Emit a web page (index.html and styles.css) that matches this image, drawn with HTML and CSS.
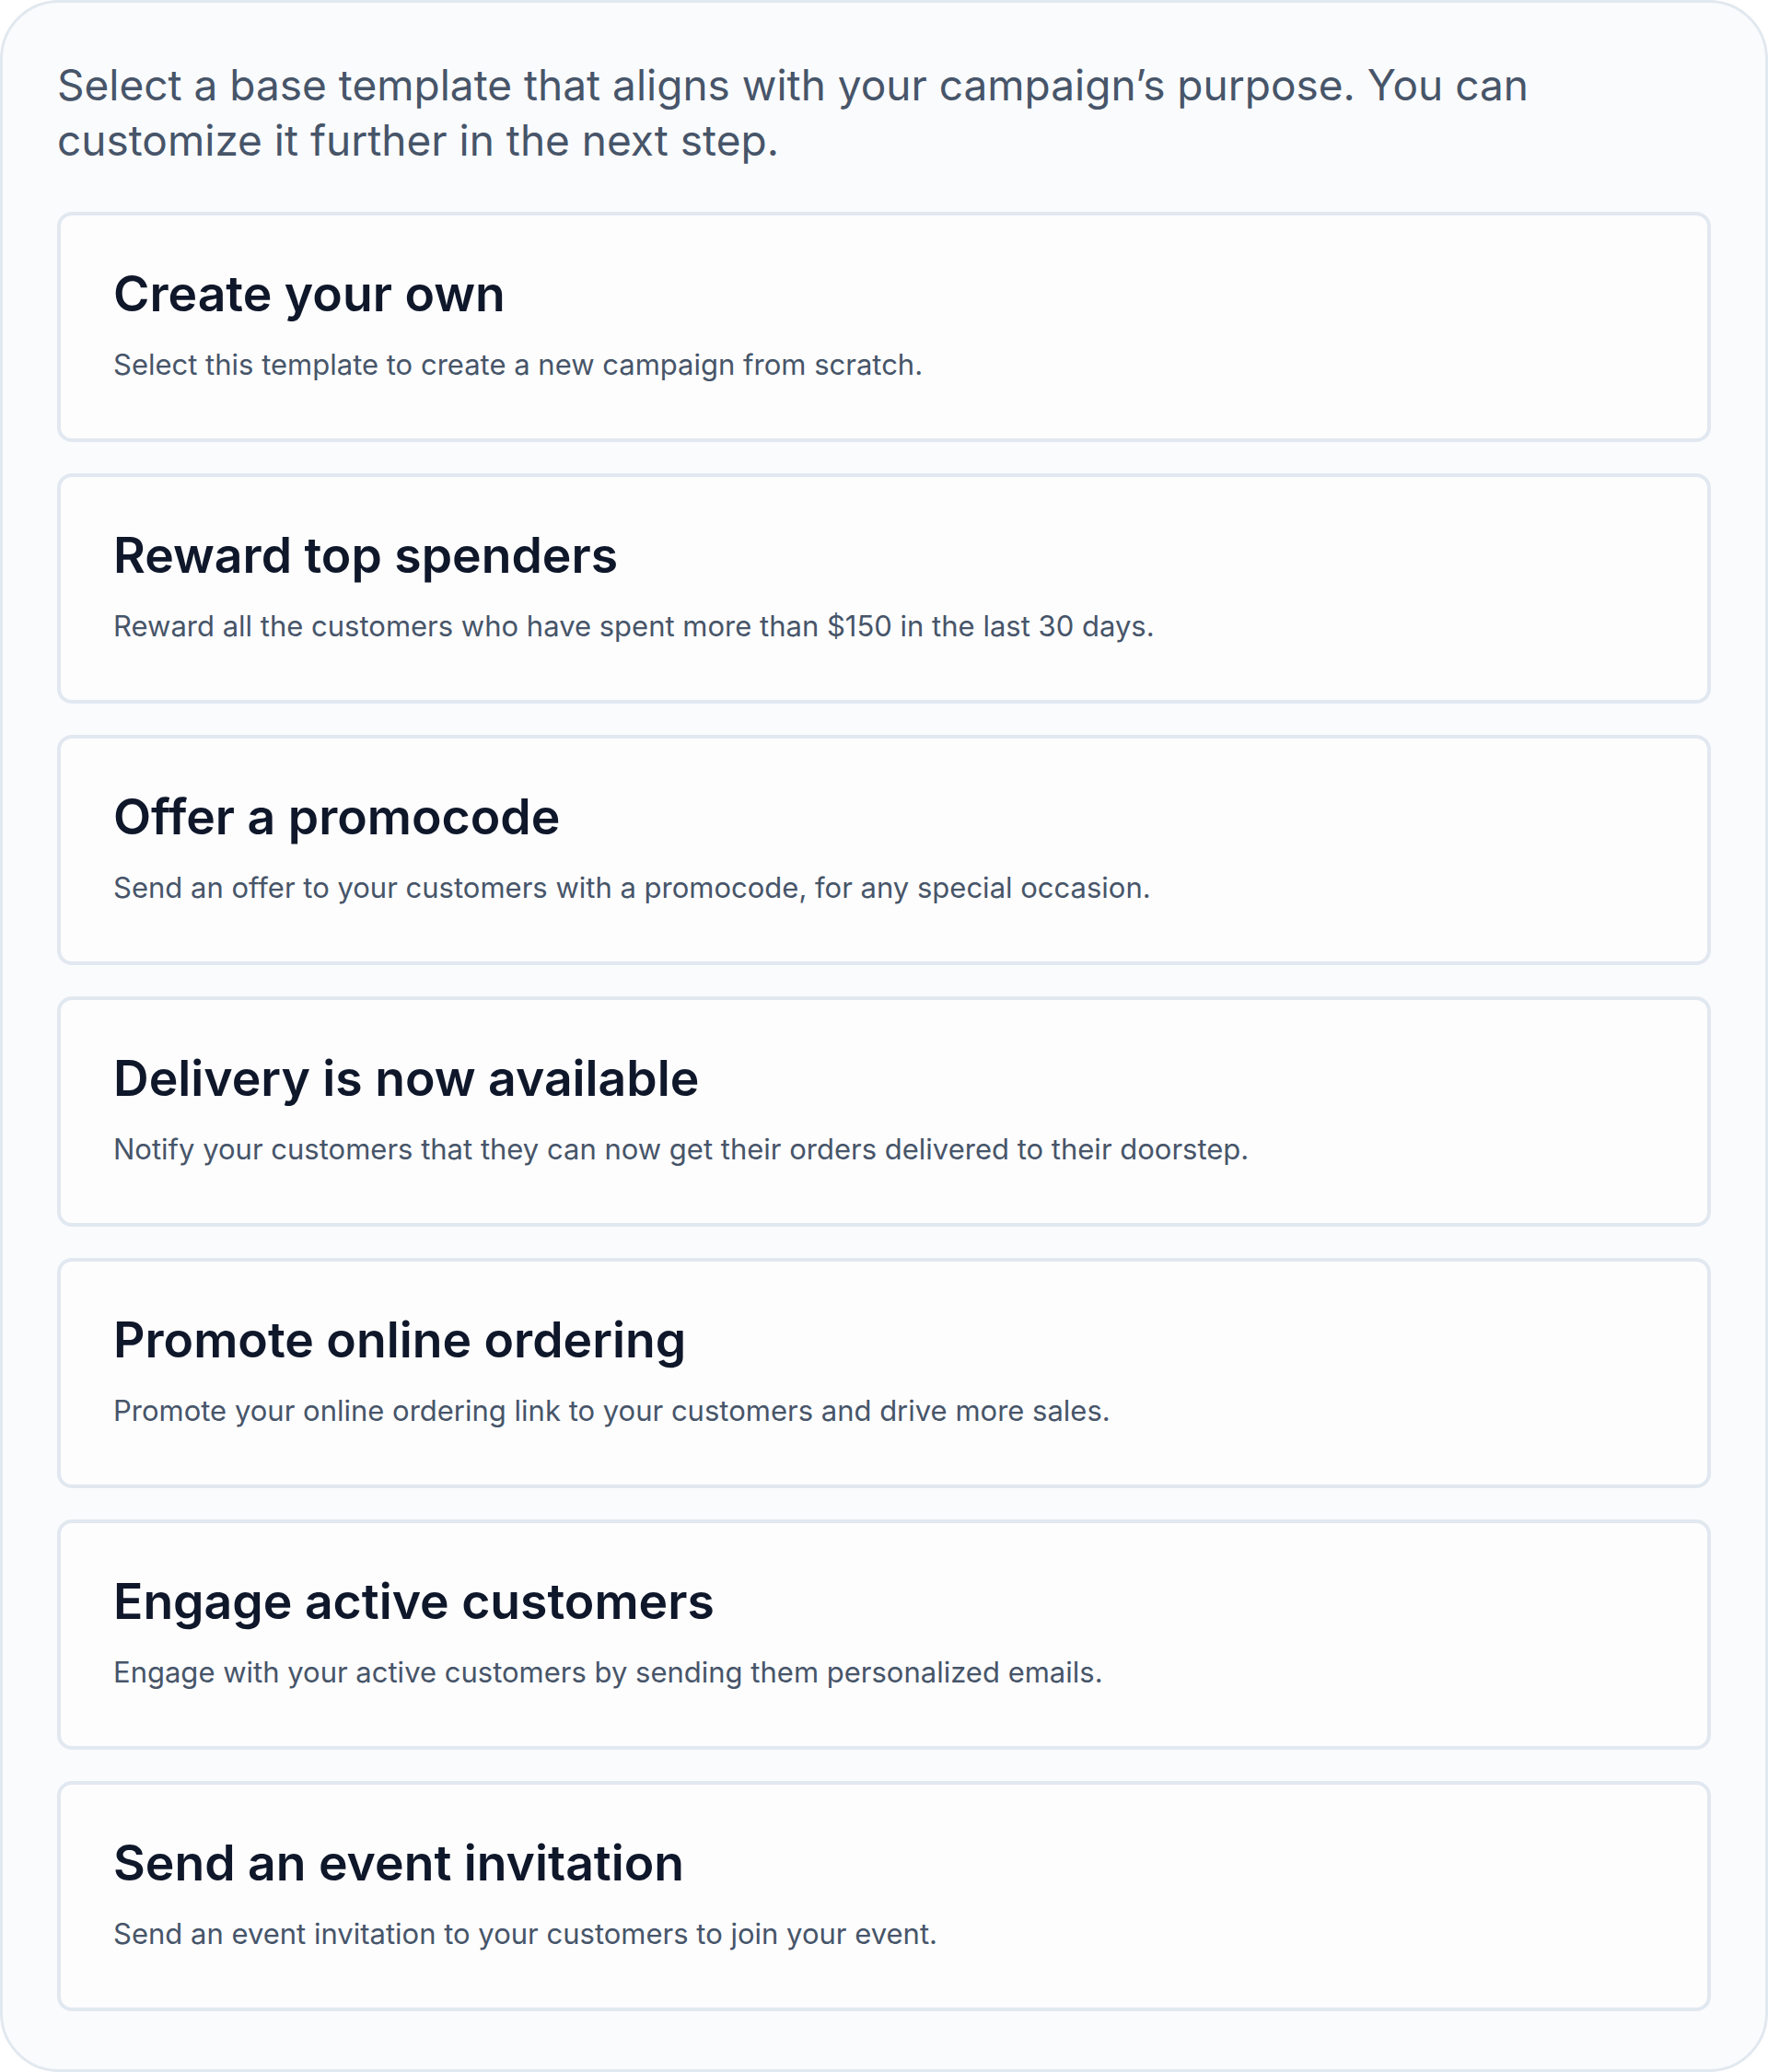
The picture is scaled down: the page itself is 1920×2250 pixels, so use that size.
FILE: index.html
```html
<!DOCTYPE html>
<html lang="en">
<head>
<meta charset="utf-8">
<title>Select a template</title>
<link rel="stylesheet" href="styles.css">
</head>
<body>
<div class="panel">
  <p class="intro">Select a base template that aligns with your campaign’s purpose. You can customize it further in the next step.</p>
  <div class="list">
    <div class="card">
      <h2 class="card-title">Create your own</h2>
      <p class="card-desc">Select this template to create a new campaign from scratch.</p>
    </div>
    <div class="card">
      <h2 class="card-title">Reward top spenders</h2>
      <p class="card-desc">Reward all the customers who have spent more than $150 in the last 30 days.</p>
    </div>
    <div class="card">
      <h2 class="card-title">Offer a promocode</h2>
      <p class="card-desc">Send an offer to your customers with a promocode, for any special occasion.</p>
    </div>
    <div class="card">
      <h2 class="card-title">Delivery is now available</h2>
      <p class="card-desc">Notify your customers that they can now get their orders delivered to their doorstep.</p>
    </div>
    <div class="card">
      <h2 class="card-title">Promote online ordering</h2>
      <p class="card-desc">Promote your online ordering link to your customers and drive more sales.</p>
    </div>
    <div class="card">
      <h2 class="card-title">Engage active customers</h2>
      <p class="card-desc">Engage with your active customers by sending them personalized emails.</p>
    </div>
    <div class="card">
      <h2 class="card-title">Send an event invitation</h2>
      <p class="card-desc">Send an event invitation to your customers to join your event.</p>
    </div>
  </div>
</div>
</body>
</html>
```

FILE: styles.css
```css
* { box-sizing: border-box; }
html, body { margin: 0; padding: 0; background: #ffffff; }
body { font-family: Inter, "Noto Sans", "Liberation Sans", sans-serif; }

.panel {
  width: 1920px;
  height: 2250px;
  border: 3px solid #e2e8f0;
  border-radius: 64px;
  background: #fafbfd;
  padding: 59px 59px 64px;
}

.intro {
  margin: 0 0 48px;
  font-size: 46px;
  line-height: 60px;
  color: #475569;
  font-weight: 400;
  max-width: 1700px;
}

.list {
  display: flex;
  flex-direction: column;
  gap: 34px;
}

.card {
  height: 250px;
  border: 4px solid #e2e8f0;
  border-radius: 16px;
  background: #fdfdfe;
  padding: 53px 57px 60px;
}

.card-title {
  margin: 0;
  font-size: 53.5px;
  line-height: 64px;
  font-weight: 600;
  color: #0f172a;
}

.card-desc {
  margin: 25px 0 0;
  font-size: 31px;
  line-height: 40px;
  color: #475569;
}
```
